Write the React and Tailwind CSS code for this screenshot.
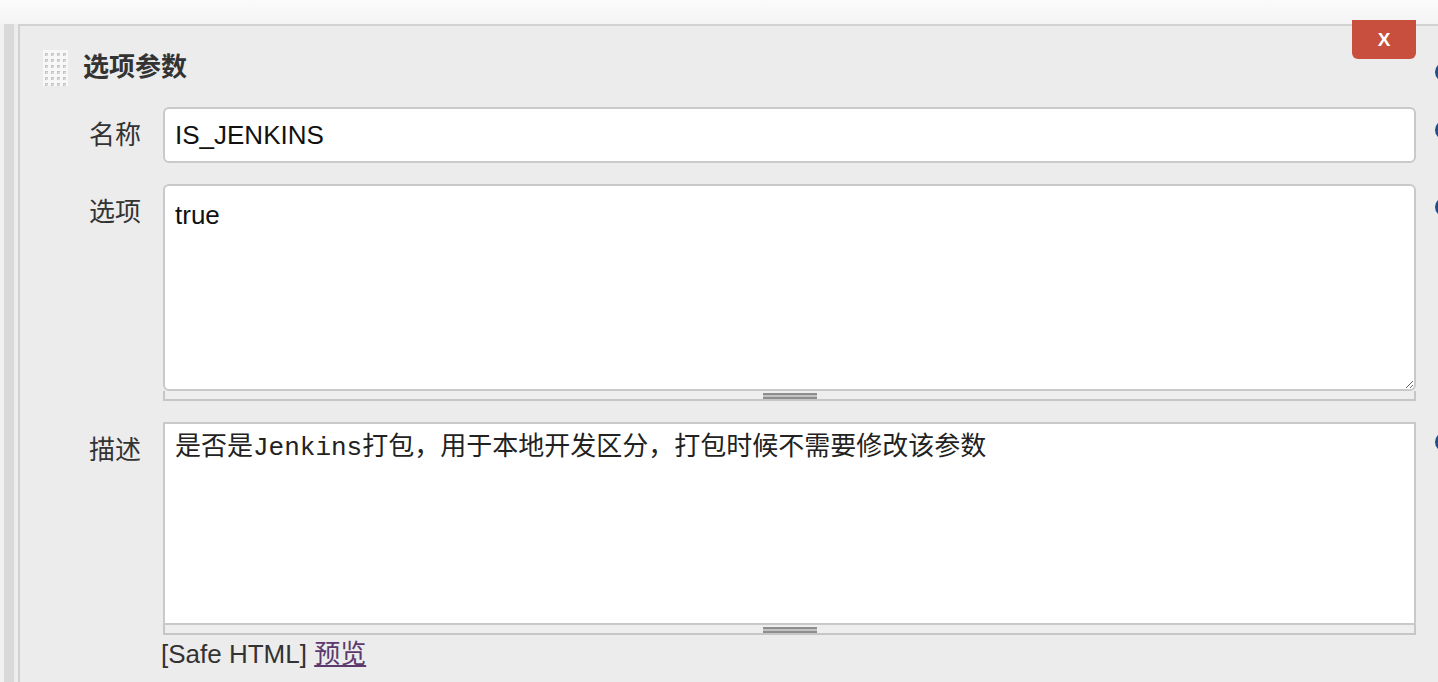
import { useState } from "react";

const sans = "font-['Liberation_Sans','Noto_Sans_CJK_SC',sans-serif]";
const mono = "font-['Liberation_Mono','Noto_Sans_CJK_SC',monospace]";

function DragHandle() {
  const dots = [];
  for (let r = 0; r < 6; r++) {
    for (let c = 0; c < 4; c++) {
      dots.push(
        <g key={`${r}-${c}`}>
          <rect x={2 + c * 6} y={3 + r * 6} width="3" height="3" fill="#c4c4c4" />
          <rect x={3 + c * 6} y={4 + r * 6} width="2" height="2" fill="#d8d8d8" />
        </g>
      );
    }
  }
  return (
    <svg width="25" height="36" viewBox="0 0 25 36" className="shrink-0">
      <rect width="25" height="36" fill="#f7f7f7" />
      {dots}
    </svg>
  );
}

function HelpDot({ className = "" }) {
  return (
    <div
      className={`w-[20px] h-[20px] rounded-full bg-[#214c8c] shrink-0 ${className}`}
    />
  );
}

function Grippie() {
  return (
    <div className="h-[10px] bg-[#eeeeee] border-x-2 border-b-2 border-[#c6c6c6] flex justify-center pt-[2px]">
      <div className="w-[54px] h-[6px] bg-[#c2c2c2] border-y-2 border-[#8e8e8e]" />
    </div>
  );
}

export default function App() {
  const [nome, setNome] = useState("IS_JENKINS");
  const [opcoes, setOpcoes] = useState("true");
  const [desc, setDesc] = useState(
    "是否是Jenkins打包，用于本地开发区分，打包时候不需要修改该参数"
  );

  return (
    <div
      className={`w-[1438px] h-[682px] overflow-hidden bg-[#ececec] flex flex-col ${sans}`}
    >
      {/* faixa superior */}
      <div className="h-[24px] shrink-0 bg-gradient-to-b from-[#fbfbfb] to-[#f4f4f4]" />

      <div className="flex flex-1 min-h-0">
        <div className="w-[4px] shrink-0 bg-[#f1f1f1]" />
        <div className="w-[10px] shrink-0 bg-[#d9d9d9]" />
        <div className="w-[4px] shrink-0 bg-[#ededed]" />

        <div className="relative flex-1 min-w-0 border-l-2 border-t-2 border-[#d2d2d2] bg-[#ececec]">
          <button className="absolute top-[-6px] right-[22px] w-[64px] h-[39px] bg-[#c84f3d] rounded-b-[6px] text-white text-[19px] font-bold leading-none flex items-center justify-center">
            X
          </button>

          {/* cabeçalho */}
          <div className="flex items-start pt-[24px] pl-[23px]">
            <DragHandle />
            <h2 className="ml-[15px] mt-[2px] text-[26px] leading-[30px] font-bold text-[#333]">
              选项参数
            </h2>
            <div className="flex-1" />
            <HelpDot className="mt-[12px] mr-[-17px]" />
          </div>

          {/* campos */}
          <div className="mt-[21px] flex flex-col">
            <div className="flex items-start">
              <label className="w-[121px] shrink-0 text-right pt-[13px] text-[26px] leading-[30px] text-[#333]">
                名称
              </label>
              <div className="ml-[22px] w-[1253px] shrink-0">
                <input
                  type="text"
                  value={nome}
                  onChange={(e) => setNome(e.target.value)}
                  className="w-full h-[56px] px-[10px] bg-white border-2 border-[#c9c9c9] rounded-[6px] outline-none text-[26px] text-[#111]"
                />
              </div>
              <HelpDot className="ml-[19px] mt-[13px]" />
            </div>

            <div className="flex items-start mt-[21px]">
              <label className="w-[121px] shrink-0 text-right pt-[13px] text-[26px] leading-[30px] text-[#333]">
                选项
              </label>
              <div className="ml-[22px] w-[1253px] shrink-0 flex flex-col">
                <textarea
                  value={opcoes}
                  onChange={(e) => setOpcoes(e.target.value)}
                  className="block w-full h-[207px] pt-[14px] px-[10px] bg-white border-2 border-[#c9c9c9] rounded-[6px] outline-none resize-y text-[26px] leading-[30px] text-[#111]"
                />
                <Grippie />
              </div>
              <HelpDot className="ml-[19px] mt-[13px]" />
            </div>

            <div className="flex items-start mt-[21px]">
              <label className="w-[121px] shrink-0 text-right pt-[13px] text-[26px] leading-[30px] text-[#333]">
                描述
              </label>
              <div className="ml-[22px] w-[1253px] shrink-0 flex flex-col">
                <textarea
                  value={desc}
                  onChange={(e) => setDesc(e.target.value)}
                  className={`block w-full h-[203px] pt-[9px] px-[10px] bg-white border-2 border-[#c9c9c9] outline-none resize-none text-[26px] leading-[30px] text-[#222] ${mono}`}
                />
                <Grippie />
                <div className="mt-[4px] -ml-[2px] text-[26px] leading-[30px] text-[#333]">
                  [Safe HTML]{" "}
                  <a href="#" className="text-[#5c3a6e] underline">
                    预览
                  </a>
                </div>
              </div>
              <HelpDot className="ml-[19px] mt-[10px]" />
            </div>
          </div>
        </div>
      </div>
    </div>
  );
}
